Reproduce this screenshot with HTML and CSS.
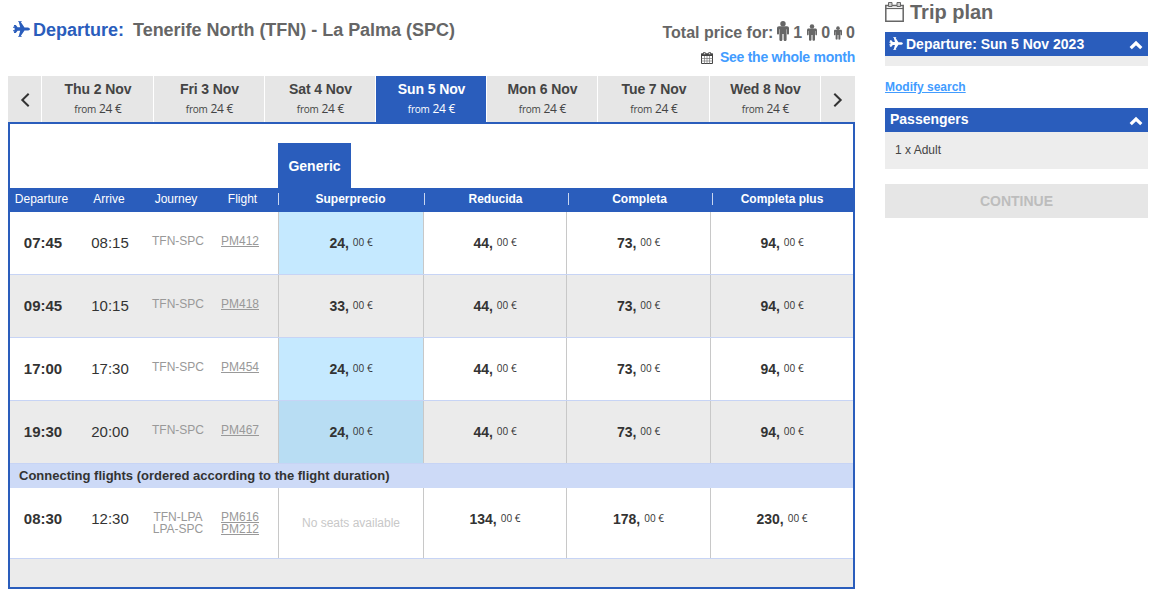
FILE: index.html
```html
<!DOCTYPE html>
<html lang="en">
<head>
<meta charset="utf-8">
<title>Trip plan</title>
<link rel="stylesheet" href="styles.css">
</head>
<body>
<svg class="defs" width="0" height="0">
  <symbol id="plane" viewBox="0 0 17 16"><path d="M17 8c0 1-1.600 1.600-3 1.600h-2.500L7.600 15.300H5.700L7.200 9.700H4.600L2.800 12H.9L1.700 8 .9 4h1.900l1.800 2.300h2.600L5.700.7h1.900l3.900 5.700H14c1.400 0 3 .6 3 1.600z"/><path d="M0 5.800h3v.9H0zM0 9.300h3v.9H0zM5.200.2h3.500v.9H5.200zM5.200 14.900h3.500v.9H5.200z"/></symbol>
  <symbol id="person" viewBox="0 0 12 20"><circle cx="6" cy="2.700" r="2.700"/><path d="M2 5.300h8c1.300 0 2 .8 2 2v5.200c0 1.300-2 1.300-2 0V8.300h-.4v10.400c0 1.700-3 1.700-3 0v-5.700h-1.200v5.700c0 1.700-3 1.700-3 0V8.300H2v4.200c0 1.300-2 1.300-2 0V7.300c0-1.200.7-2 2-2z"/></symbol>
  <symbol id="up" viewBox="0 0 14 10"><path d="M1.700 8.200 7 3l5.300 5.200" fill="none" stroke="currentColor" stroke-width="3.200"/></symbol>
</svg>
<div class="page">
  <main class="main">
    <header class="top">
      <h1 class="route"><svg class="plane"><use href="#plane"/></svg><span class="dep">Departure:</span><span class="place">Tenerife North (TFN) - La Palma (SPC)</span></h1>
      <div class="summary">
        <div class="total"><span>Total price for:</span><svg class="p1"><use href="#person"/></svg><span>1</span><svg class="p2"><use href="#person"/></svg><span>0</span><svg class="p3"><use href="#person"/></svg><span>0</span></div>
        <a class="month"><svg class="cal" viewBox="0 0 12 12"><path d="M.5 2h11v9.500H.5z" fill="#fff" stroke="#444"/><path d="M0 1.500h12V4H0z" fill="#444"/><path d="M.5 6.500h11M.5 9h11M3.500 4v7.500M6 4v7.500M8.500 4v7.500" stroke="#777" stroke-width=".7"/><path d="M2.500.4h1.700v2.300H2.500zM7.800.4h1.700v2.300H7.800z" fill="#fff" stroke="#444" stroke-width=".8"/></svg>See the whole month</a>
      </div>
    </header>
    <nav class="days">
      <span class="arrow"><svg viewBox="0 0 10 16"><path d="M8.700 1.700 2.300 8l6.400 6.300"/></svg></span>
      <div class="day"><b>Thu 2 Nov</b><span class="from"><small>from</small> 24 €</span></div>
      <div class="day"><b>Fri 3 Nov</b><span class="from"><small>from</small> 24 €</span></div>
      <div class="day"><b>Sat 4 Nov</b><span class="from"><small>from</small> 24 €</span></div>
      <div class="day active"><b>Sun 5 Nov</b><span class="from"><small>from</small> 24 €</span></div>
      <div class="day"><b>Mon 6 Nov</b><span class="from"><small>from</small> 24 €</span></div>
      <div class="day"><b>Tue 7 Nov</b><span class="from"><small>from</small> 24 €</span></div>
      <div class="day"><b>Wed 8 Nov</b><span class="from"><small>from</small> 24 €</span></div>
      <span class="arrow"><svg viewBox="0 0 10 16"><path d="M1.300 1.700 7.700 8l-6.400 6.300"/></svg></span>
    </nav>
    <section class="flights">
      <div class="group"><span class="generic">Generic</span></div>
      <div class="head">
        <span>Departure</span><span>Arrive</span><span>Journey</span><span>Flight</span>
        <b class="fare">Superprecio</b><b class="fare">Reducida</b><b class="fare">Completa</b><b class="fare">Completa plus</b>
      </div>
      <div class="row">
        <b class="time">07:45</b><span class="time">08:15</span><span class="leg">TFN-SPC</span><a class="leg link">PM412</a>
        <div class="price best"><b>24,</b><small>00 €</small></div><div class="price"><b>44,</b><small>00 €</small></div><div class="price"><b>73,</b><small>00 €</small></div><div class="price"><b>94,</b><small>00 €</small></div>
      </div>
      <div class="row alt">
        <b class="time">09:45</b><span class="time">10:15</span><span class="leg">TFN-SPC</span><a class="leg link">PM418</a>
        <div class="price"><b>33,</b><small>00 €</small></div><div class="price"><b>44,</b><small>00 €</small></div><div class="price"><b>73,</b><small>00 €</small></div><div class="price"><b>94,</b><small>00 €</small></div>
      </div>
      <div class="row">
        <b class="time">17:00</b><span class="time">17:30</span><span class="leg">TFN-SPC</span><a class="leg link">PM454</a>
        <div class="price best"><b>24,</b><small>00 €</small></div><div class="price"><b>44,</b><small>00 €</small></div><div class="price"><b>73,</b><small>00 €</small></div><div class="price"><b>94,</b><small>00 €</small></div>
      </div>
      <div class="row alt">
        <b class="time">19:30</b><span class="time">20:00</span><span class="leg">TFN-SPC</span><a class="leg link">PM467</a>
        <div class="price best"><b>24,</b><small>00 €</small></div><div class="price"><b>44,</b><small>00 €</small></div><div class="price"><b>73,</b><small>00 €</small></div><div class="price"><b>94,</b><small>00 €</small></div>
      </div>
      <div class="connecting">Connecting flights (ordered according to the flight duration)</div>
      <div class="row tall">
        <b class="time">08:30</b><span class="time">12:30</span><span class="leg">TFN-LPA<br>LPA-SPC</span><a class="leg link">PM616<br>PM212</a>
        <div class="price none">No seats available</div><div class="price"><b>134,</b><small>00 €</small></div><div class="price"><b>178,</b><small>00 €</small></div><div class="price"><b>230,</b><small>00 €</small></div>
      </div>
      <div class="foot"></div>
    </section>
  </main>
  <aside class="side">
    <h2 class="plan"><svg viewBox="0 0 20 20"><path d="M.8 3.500h17.400v15.700H.8z" fill="none" stroke="#666" stroke-width="1.500"/><path d="M.8 6.500h17.400" stroke="#666" stroke-width="1.200"/><path d="M3.500.5h3.500v4H3.500zM12 .5h3.500v4H12z" fill="#ccc" stroke="#666"/></svg>Trip plan</h2>
    <div class="bar"><svg class="splane"><use href="#plane"/></svg><span class="trip">Departure: Sun 5 Nov 2023</span><svg class="up"><use href="#up"/></svg></div>
    <div class="strip"></div>
    <a class="modify">Modify search</a>
    <div class="bar"><span>Passengers</span><svg class="up"><use href="#up"/></svg></div>
    <div class="pax">1 x Adult</div>
    <button class="continue">CONTINUE</button>
  </aside>
</div>
</body>
</html>
```
FILE: styles.css
```css
* { box-sizing: border-box; }
body { margin: 0; background: #fff; color: #333; font-family: "Liberation Sans", Arial, sans-serif; font-size: 12px; }
svg { display: block; fill: currentColor; flex: none; }
.defs { position: absolute; }
.page { display: flex; gap: 30px; height: 594px; padding-left: 8px; overflow: hidden; }
.main { width: 847px; }
.top { display: flex; justify-content: space-between; height: 76px; white-space: nowrap; }
.route { display: flex; margin: 19px 0 0 5px; height: 22px; line-height: 22px; font-size: 18px; color: #2a5dbc; }
.plane { width: 17px; height: 16px; margin: 2px 3px 0 0; }
.dep { width: 100px; }
.place { color: #666; letter-spacing: -.02px; }
.summary { display: flex; flex-direction: column; align-items: flex-end; padding-top: 21px; }
.total { display: flex; height: 22px; line-height: 23px; font-size: 16px; font-weight: bold; color: #666; }
.p1 { width: 12px; height: 20px; margin: 0 4px; }
.p2 { width: 10px; height: 17px; margin: 3px 4px 0 5px; }
.p3 { width: 8px; height: 14px; margin: 5px 4px 0 4px; }
.month { display: flex; height: 28px; line-height: 28px; font-size: 14px; font-weight: bold; color: #429cff; letter-spacing: -.26px; }
.cal { width: 12px; height: 12px; margin: 9px 7px 0 0; }

.days { display: grid; grid-template-columns: 33px 111px 110px 110px 110px 110px 111px 110px 34px; column-gap: 1px; height: 46px; color: #444; }
.day, .arrow { background: #e6e6e6; }
.arrow { display: flex; align-items: center; justify-content: center; }
.arrow svg { width: 10px; height: 16px; fill: none; stroke: #333; stroke-width: 2; margin-top: 1px; }
.day { display: flex; flex-direction: column; align-items: center; padding: 4px 0 0 1px; }
.day b { font-size: 14px; line-height: 18px; letter-spacing: -.1px; }
.from { font: 12px/22px "Open Sans", "Noto Sans", sans-serif; letter-spacing: -.25px; }
.from small { font-size: 10px; }
.active { background: #2a5dbc; color: #fff; }

.flights { height: 467px; border: 2px solid #2a5dbc; }
.group { height: 64px; padding: 19px 0 0 268px; }
.generic { display: block; width: 73px; height: 45px; line-height: 46px; text-align: center; background: #2a5dbc; color: #fff; font-size: 14px; font-weight: bold; }
.head { display: grid; grid-template-columns: 63px 72px 62px 71px 146px 144px 144px 141px; height: 24px; line-height: 22px; background: #2a5dbc; color: #fff; text-align: center; }
.fare { height: 12px; line-height: 12px; margin-top: 5px; padding-right: 2px; border-left: 1px solid #c9d6f0; }
.row { display: grid; grid-template-columns: 66px 68px 68px 66px 146px 142px 144px 143px; height: 63px; border-bottom: 1px solid #c7d4f5; text-align: center; }
.alt { background: #ebebeb; }
.time { line-height: 62px; font-size: 15px; }
b.time { font-size: 15px; }
.leg { color: #999; line-height: 12px; padding-top: 23px; }
.link { text-decoration: underline; padding-right: 10px; }
.price { display: flex; justify-content: center; align-items: center; gap: 4px; border-left: 1px solid #c8c8c8; }
.price:nth-child(5) { border-right: 1px solid #c8c8c8; }
.price:nth-child(6) { border-left: 0; }
.price b { font-size: 14px; line-height: 20px; }
.price small { font: 10px/20px "Open Sans", "Noto Sans", sans-serif; padding-bottom: 2px; }
.best { background: #c5e9ff; }
.alt .best { background: #b8ddf3; }
.connecting { height: 24px; line-height: 24px; padding-left: 9px; background: #cddaf7; font-size: 13px; font-weight: bold; }
.tall { height: 71px; }
.tall .price { padding-bottom: 8px; }
.tall .none { color: #c8c8c8; padding-bottom: 0; }
.foot { height: 28px; background: #ebebeb; }

.side { width: 263px; }
.plan { display: flex; height: 32px; margin: 0; line-height: 24px; font-size: 20px; color: #666; }
.plan svg { width: 20px; height: 20px; margin: 2px 5px 0 0; }
.bar { display: flex; height: 24px; padding: 0 5px; line-height: 23px; background: #2a5dbc; color: #fff; font-size: 14px; font-weight: bold; }
.trip { line-height: 24px; }
.splane { width: 14px; height: 13px; margin: 5px 3px 0 -1px; }
.up { width: 14px; height: 10px; margin: 8px 0 0 auto; }
.strip { height: 10px; background: #ededed; }
.modify { display: block; height: 42px; padding-top: 14px; line-height: 14px; font-weight: bold; color: #429cff; text-decoration: underline; }
.pax { height: 37px; line-height: 36px; padding-left: 10px; background: #ededed; color: #444; }
.continue { display: block; width: 263px; height: 34px; margin-top: 15px; padding: 0; border: 0; background: #e6e6e6; color: #bdbdbd; font: bold 14px "Liberation Sans", Arial, sans-serif; }
```
